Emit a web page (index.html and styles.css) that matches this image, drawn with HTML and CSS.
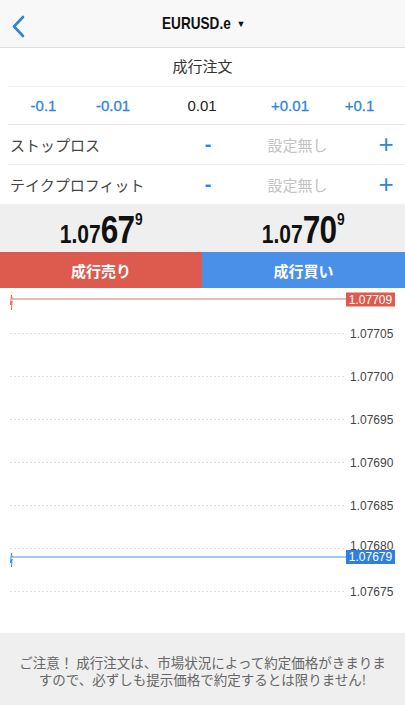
FILE: index.html
```html
<!DOCTYPE html>
<html>
  <head>
    <title>EURUSD.e 成行注文</title>
    <meta charset="UTF-8">
    <meta name="viewport" content="width=device-width, initial-scale=1.0">
    <link rel="stylesheet" href="styles.css">
  </head>
  <body>
    <div class="nav">
      <svg class="back" width="40" height="47" viewBox="0 0 40 47">
        <path d="M23 17 L14 26.5 L23 36" fill="none" stroke="#2b86df" stroke-width="2.6" stroke-linecap="round" stroke-linejoin="round"/>
      </svg>
      <div class="nav-title"><span class="symbol">EURUSD.e</span><span class="caret">▼</span></div>
      <div></div>
    </div>

    <div class="order-type">成行注文</div>

    <div class="qty">
      <span class="step">-0.1</span>
      <span class="step">-0.01</span>
      <span class="qty-value">0.01</span>
      <span class="step">+0.01</span>
      <span class="step">+0.1</span>
    </div>

    <!-- stop loss / take profit -->
    <div class="row">
      <span class="row-label">ストップロス</span>
      <span class="minus">-</span>
      <span class="row-value">設定無し</span>
      <span class="plus">+</span>
    </div>
    <div class="row last">
      <span class="row-label">テイクプロフィット</span>
      <span class="minus">-</span>
      <span class="row-value">設定無し</span>
      <span class="plus">+</span>
    </div>

    <div class="prices">
      <div class="price"><span class="quote"><span class="p-small">1.07</span><span class="p-big">67</span><span class="p-sup">9</span></span></div>
      <div class="price"><span class="quote"><span class="p-small">1.07</span><span class="p-big">70</span><span class="p-sup">9</span></span></div>
    </div>

    <div class="actions">
      <button class="sell">成行売り</button>
      <button class="buy">成行買い</button>
    </div>

    <svg class="chart" width="405" height="345" viewBox="0 0 405 345">
      <g stroke="#dedede" stroke-width="1" stroke-dasharray="2 2">
        <line x1="10" y1="45.5" x2="345" y2="45.5"/>
        <line x1="10" y1="88.5" x2="345" y2="88.5"/>
        <line x1="10" y1="131.5" x2="345" y2="131.5"/>
        <line x1="10" y1="174.5" x2="345" y2="174.5"/>
        <line x1="10" y1="217.5" x2="345" y2="217.5"/>
        <line x1="10" y1="260.5" x2="345" y2="260.5"/>
        <line x1="10" y1="303.5" x2="345" y2="303.5"/>
      </g>
      <g class="axis">
        <text x="350" y="49.5">1.07705</text>
        <text x="350" y="92.5">1.07700</text>
        <text x="350" y="135.5">1.07695</text>
        <text x="350" y="178.5">1.07690</text>
        <text x="350" y="221.5">1.07685</text>
        <text x="350" y="262">1.07680</text>
        <text x="350" y="307.5">1.07675</text>
      </g>

      <!-- ask line -->
      <polyline points="12,11 11.5,7 10.5,17 12,13 11.5,22" fill="none" stroke="#e0645a" stroke-width="1"/>
      <line x1="12" y1="11" x2="347" y2="11" stroke="#e5a29c" stroke-width="1.6"/>
      <rect x="346" y="4.5" width="49" height="14" fill="#dc5b4e"/>
      <text class="tag" x="370.5" y="15.5">1.07709</text>

      <!-- bid line -->
      <polyline points="12,269 11.5,265 10.5,275 12,271 11.5,279" fill="none" stroke="#3a86e0" stroke-width="1"/>
      <line x1="12" y1="269" x2="347" y2="269" stroke="#4a8de0" stroke-width="1.2"/>
      <rect x="346" y="262" width="49" height="14" fill="#2f7fe0"/>
      <text class="tag" x="370.5" y="273">1.07679</text>
    </svg>

    <div class="notice">
      <div>ご注意！ 成行注文は、市場状況によって約定価格がきまりま</div>
      <div>すので、必ずしも提示価格で約定するとは限りません!</div>
    </div>
  </body>
</html>
```

FILE: styles.css
```css
body {
    margin: 0;
    width: 405px;
    height: 705px;
    overflow: hidden;
    background-color: white;
    font-family: "Liberation Sans", "Noto Sans CJK JP", sans-serif;
    color: #333;
}
.nav {
    height: 47px;
    display: grid;
    grid-template-columns: 40px 1fr 40px;
    align-items: center;
    background-color: #f8f8f8;
    border-bottom: 1px solid #dedede;
}
.back {
    display: block;
}
.nav-title {
    display: flex;
    justify-content: center;
    align-items: center;
    padding-left: 2px;
    color: #111;
}
.symbol {
    display: inline-block;
    width: 69px;
    font-weight: bold;
    font-size: 17px;
    transform: scaleX(0.8);
    transform-origin: left center;
    white-space: nowrap;
}
.caret {
    font-size: 9px;
    margin-left: 6px;
    margin-top: 1px;
}
.order-type {
    height: 38px;
    line-height: 38px;
    text-align: center;
    font-size: 15px;
    color: #333;
    margin-left: 8px;
    padding-right: 8px;
    border-bottom: 1px solid #f2f2f2;
}
.qty {
    height: 37px;
    margin-left: 8px;
    padding-right: 9px;
    display: grid;
    grid-template-columns: 71px 68px 110px 66px 1fr;
    justify-items: center;
    align-items: center;
    font-size: 15px;
    border-bottom: 1px solid #e8e8e8;
}
.step {
    color: #2b86df;
    -webkit-text-stroke: 0.3px #2b86df;
}
.qty-value {
    color: #222;
}
.row {
    height: 39px;
    margin-left: 8px;
    padding-left: 2px;
    display: grid;
    grid-template-columns: 178px 40px 1fr 38px;
    align-items: center;
    font-size: 15px;
    border-bottom: 1px solid #ececec;
}
.row.last {
    border-bottom: none;
}
.row-label {
    color: #444;
    font-family: "Noto Sans CJK JP", sans-serif;
}
.minus,
.plus {
    text-align: center;
    color: #2b86df;
}
.minus {
    font-size: 20px;
    font-weight: bold;
}
.plus {
    font-size: 26px;
    font-weight: 300;
}
.row-value {
    text-align: center;
    color: #c2c2c2;
    font-family: "Noto Sans CJK JP", sans-serif;
}
.prices {
    height: 48px;
    display: grid;
    grid-template-columns: 202px 1fr;
    background-color: #efefef;
}
.price {
    display: flex;
    justify-content: center;
    align-items: center;
}
.quote {
    display: inline-flex;
    align-items: baseline;
    margin-top: 3px;
    font-weight: bold;
    color: #111;
    line-height: 1;
    transform: scaleX(0.81);
}
.p-small {
    font-size: 26px;
}
.p-big {
    font-size: 39px;
    letter-spacing: -1px;
}
.p-sup {
    font-size: 17px;
    align-self: flex-start;
    margin-top: 1px;
    margin-left: 1px;
}
.actions {
    height: 36px;
    display: grid;
    grid-template-columns: 202px 1fr;
}
.actions button {
    border: none;
    margin: 0;
    padding: 0;
    color: white;
    font-family: "Noto Sans CJK JP", sans-serif;
    font-weight: bold;
    font-size: 15px;
    cursor: pointer;
}
.sell {
    background-color: #dc5b4e;
}
.buy {
    background-color: #4a8fe8;
}
.chart {
    display: block;
}
.axis text {
    font-family: "Liberation Sans", sans-serif;
    font-size: 12px;
    fill: #444;
}
.tag {
    font-family: "Liberation Sans", sans-serif;
    font-size: 12px;
    fill: white;
    text-anchor: middle;
}
.notice {
    height: 72px;
    box-sizing: border-box;
    padding: 21px 8px 0;
    background-color: #efefef;
    text-align: center;
    font-family: "Noto Sans CJK JP", sans-serif;
    font-size: 13.5px;
    line-height: 17px;
    color: #666;
    white-space: nowrap;
}
```
